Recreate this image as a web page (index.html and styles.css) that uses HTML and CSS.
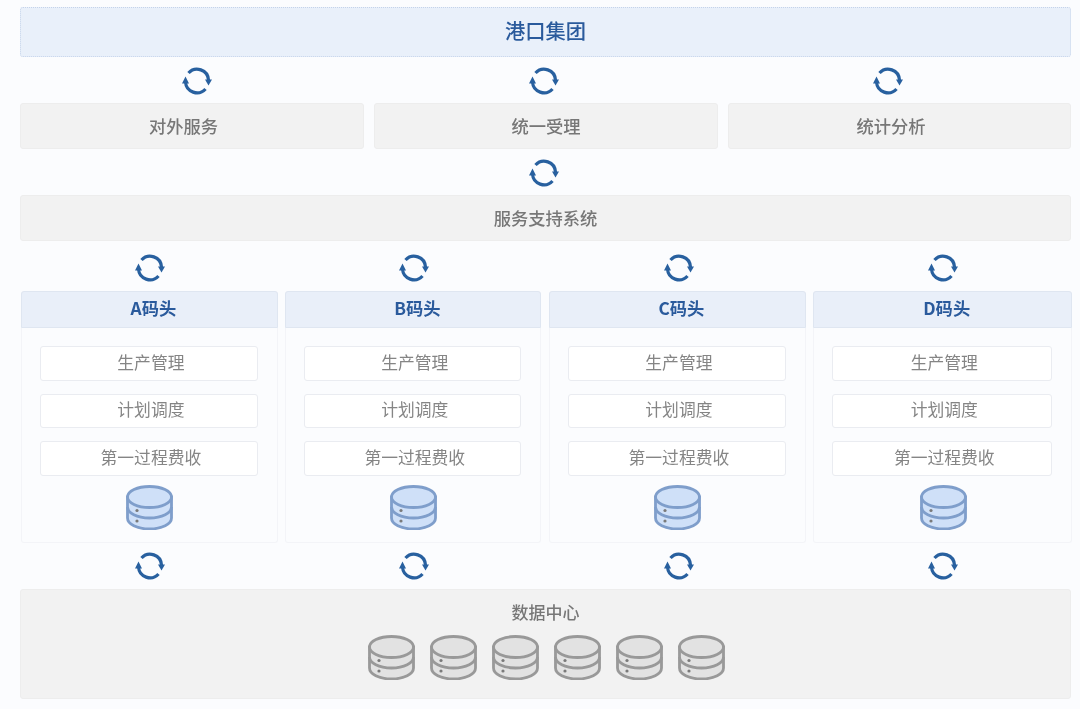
FILE: index.html
```html
<!DOCTYPE html>
<html lang="zh">
<head>
<meta charset="utf-8">
<title>港口集团</title>
<link rel="stylesheet" href="styles.css">
</head>
<body>
<svg class="defs" width="0" height="0" aria-hidden="true">
  <symbol id="sync" viewBox="0 0 32 28">
    <path d="M7.5 6A11.5 11.5 0 0 1 27.5 13" fill="none" stroke="currentColor" stroke-width="3.2"/>
    <path d="M24.5 22A11.5 11.5 0 0 1 4.5 15" fill="none" stroke="currentColor" stroke-width="3.2"/>
    <path d="M24 12.5H31L27.5 18.5Z" fill="currentColor"/>
    <path d="M1 16.5H8L4.5 9.5Z" fill="currentColor"/>
  </symbol>
  <symbol id="db" viewBox="0 0 47 45">
    <path d="M1.5 12V33C1.5 39 11 44 23.5 44S45.5 39 45.5 33V12Z"/>
    <path d="M1.5 22C1.5 28 11 33 23.5 33S45.5 28 45.5 22" fill="none"/>
    <ellipse cx="23.5" cy="12" rx="22" ry="10.5"/>
    <circle cx="11" cy="25.5" r="1.6" class="dot"/>
    <circle cx="11" cy="36" r="1.6" class="dot"/>
  </symbol>
</svg>
<main class="page">
  <header class="group">港口集团</header>
  <div class="link-row link-row-three">
    <svg class="sync"><use href="#sync"/></svg>
    <svg class="sync"><use href="#sync"/></svg>
    <svg class="sync"><use href="#sync"/></svg>
  </div>
  <div class="services">
    <div class="box box-shifted">对外服务</div>
    <div class="box">统一受理</div>
    <div class="box box-shifted">统计分析</div>
  </div>
  <div class="link-row link-row-center">
    <svg class="sync"><use href="#sync"/></svg>
  </div>
  <div class="box support">服务支持系统</div>
  <div class="link-row link-row-four link-row-tall">
    <svg class="sync"><use href="#sync"/></svg>
    <svg class="sync"><use href="#sync"/></svg>
    <svg class="sync"><use href="#sync"/></svg>
    <svg class="sync"><use href="#sync"/></svg>
  </div>
  <div class="terminals">
    <section class="terminal">
      <h2>A码头</h2>
      <div class="items">
        <div class="item">生产管理</div>
        <div class="item">计划调度</div>
        <div class="item">第一过程费收</div>
        <svg class="db db-blue"><use href="#db"/></svg>
      </div>
    </section>
    <section class="terminal">
      <h2>B码头</h2>
      <div class="items">
        <div class="item">生产管理</div>
        <div class="item">计划调度</div>
        <div class="item">第一过程费收</div>
        <svg class="db db-blue"><use href="#db"/></svg>
      </div>
    </section>
    <section class="terminal">
      <h2>C码头</h2>
      <div class="items">
        <div class="item">生产管理</div>
        <div class="item">计划调度</div>
        <div class="item">第一过程费收</div>
        <svg class="db db-blue"><use href="#db"/></svg>
      </div>
    </section>
    <section class="terminal">
      <h2>D码头</h2>
      <div class="items">
        <div class="item">生产管理</div>
        <div class="item">计划调度</div>
        <div class="item">第一过程费收</div>
        <svg class="db db-blue"><use href="#db"/></svg>
      </div>
    </section>
  </div>
  <div class="link-row link-row-four">
    <svg class="sync"><use href="#sync"/></svg>
    <svg class="sync"><use href="#sync"/></svg>
    <svg class="sync"><use href="#sync"/></svg>
    <svg class="sync"><use href="#sync"/></svg>
  </div>
  <section class="data-center">
    <h2>数据中心</h2>
    <div class="stores">
      <svg class="db db-grey"><use href="#db"/></svg>
      <svg class="db db-grey"><use href="#db"/></svg>
      <svg class="db db-grey"><use href="#db"/></svg>
      <svg class="db db-grey"><use href="#db"/></svg>
      <svg class="db db-grey"><use href="#db"/></svg>
      <svg class="db db-grey"><use href="#db"/></svg>
    </div>
  </section>
</main>
</body>
</html>
```

FILE: styles.css
```css
* {
  box-sizing: border-box;
}

html,
body {
  margin: 0;
  height: 100%;
  overflow: hidden;
}

body {
  background: #fbfcfe;
  font-family: "Noto Sans CJK SC", "Noto Sans", sans-serif;
}

.defs {
  display: block;
  height: 0;
}

.page {
  height: 709px;
  padding: 7px 9px 10px 20px;
  background: #fbfcfe;
  filter: blur(0.35px);
}

.group {
  height: 50px;
  display: flex;
  align-items: center;
  justify-content: center;
  padding-bottom: 3px;
  background: #e9f0fa;
  border: 1px dotted #c5d3ea;
  border-radius: 3px;
  color: #2a5a9c;
  font-size: 20.3px;
  font-weight: 500;
  line-height: 1;
}

.sync {
  width: 32px;
  height: 28px;
  color: #28609f;
  flex: none;
  display: block;
}

.link-row {
  height: 46px;
  display: flex;
  align-items: center;
}

.link-row-three {
  padding: 2px 0 0 161px;
  gap: 315px;
}

.link-row-three .sync + .sync + .sync {
  margin-left: -3px;
}

.link-row-center {
  justify-content: center;
  padding: 2px 3px 0 0;
}

.link-row-four {
  padding-left: 114px;
  gap: 232.4px;
}

.link-row-tall {
  height: 50px;
  padding-top: 4px;
}

.services {
  display: grid;
  grid-template-columns: 344px 344px 343px;
  gap: 10px;
}

.box {
  height: 46px;
  display: flex;
  align-items: center;
  justify-content: center;
  padding-bottom: 1px;
  background: #f2f2f2;
  border: 1px solid #ededed;
  border-radius: 3px;
  color: #777777;
  font-size: 17.3px;
  font-weight: 500;
  line-height: 1;
}

.box-shifted {
  padding-right: 17px;
}

.terminals {
  height: 252px;
  display: grid;
  grid-template-columns: 256.8px 256px 257.2px 258.5px;
  column-gap: 7.5px;
  margin: 0 -1px 0 1px;
}

.terminal {
  display: flex;
  flex-direction: column;
  background: #fbfcfe;
  border: 1px solid #f3f4f8;
  border-top: 0;
  border-radius: 3px;
}

.terminal h2 {
  margin: 0 -1px;
  height: 37px;
  display: flex;
  align-items: center;
  justify-content: center;
  padding: 0 0 3px 8px;
  background: #e9eff9;
  border: 1px solid #dfe6f1;
  border-radius: 3px 3px 0 0;
  color: #2a5a9c;
  font-size: 17.3px;
  font-weight: 700;
  line-height: 1;
}

.items {
  display: flex;
  flex-direction: column;
  align-items: center;
  gap: 13px;
  padding: 18px 19px 0 18px;
}

.item {
  width: 100%;
  height: 34.5px;
  display: flex;
  align-items: center;
  justify-content: center;
  padding: 0 0 2px 4px;
  background: #ffffff;
  border: 1px solid #eaecf1;
  border-radius: 3px;
  color: #858585;
  font-size: 16.8px;
  line-height: 1;
}

.db {
  width: 47px;
  height: 45px;
  flex: none;
  display: block;
  stroke-width: 2.8;
}

.items .db {
  margin: -3.5px 0 0 2px;
}

.db-blue {
  fill: #cfe0f8;
  stroke: #7f9ecb;
}

.db-grey {
  fill: #e2e2e2;
  stroke: #999999;
}

.dot {
  stroke: none;
  fill: #7a7a7a;
}

.data-center {
  height: 110px;
  background: #f2f2f2;
  border: 1px solid #ededed;
  border-radius: 3px;
  display: flex;
  flex-direction: column;
  align-items: center;
}

.data-center h2 {
  margin: 13px 0 15px;
  color: #777777;
  font-size: 17px;
  font-weight: 500;
  line-height: 17px;
}

.stores {
  display: flex;
  gap: 15px;
  margin-left: 2px;
}
```
